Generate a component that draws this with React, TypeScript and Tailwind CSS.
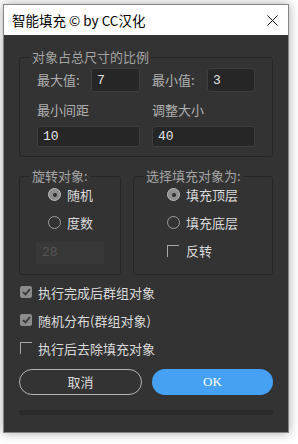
import type { ReactNode } from 'react';

const cjk = "font-['Noto_Sans_CJK_SC',sans-serif]";

function Radio({ checked, label }: { checked?: boolean; label: string }) {
  return (
    <div className="flex items-center gap-[6px] h-[17px]">
      {checked ? (
        <div className="w-[13px] h-[13px] rounded-full border border-[#bdbdbd] bg-[#8e8e8e] flex items-center justify-center">
          <div className="w-[4px] h-[4px] rounded-full bg-[#2c2c2c]" />
        </div>
      ) : (
        <div className="w-[13px] h-[13px] rounded-full border border-[#9c9c9c]" />
      )}
      <span className="text-[13px] leading-[17px] text-[#dadada]">{label}</span>
    </div>
  );
}

function Check({ checked, label }: { checked?: boolean; label: string }) {
  return (
    <div className="flex items-center gap-[6px] h-[18px]">
      {checked ? (
        <div className="w-[12px] h-[12px] rounded-[2px] bg-[#8c8c8c] flex items-center justify-center">
          <svg width="9" height="8" viewBox="0 0 9 8">
            <path d="M1 4.2 L3.4 6.4 L8 1.2" fill="none" stroke="#3a3a3a" strokeWidth="1.8" />
          </svg>
        </div>
      ) : (
        <div className="w-[12px] h-[12px] border-t border-l border-[#a8a8a8]" />
      )}
      <span className="text-[13px] leading-[17px] text-[#dadada]">{label}</span>
    </div>
  );
}

// padding goes on the inner div, Chromium places the legend after fieldset padding
function Group({ title, className, inner, children }: { title: string; className?: string; inner?: string; children: ReactNode }) {
  return (
    <fieldset className={`border border-[#262626] rounded-[3px] min-w-0 ${className ?? ''}`}>
      <legend className="ml-[10px] px-[2px] text-[13px] leading-[16px] text-[#a4a4a4] whitespace-nowrap">{title}</legend>
      <div className={inner}>{children}</div>
    </fieldset>
  );
}

function Field({ value, className }: { value: string; className?: string }) {
  return (
    <div
      className={`bg-[#262626] border border-[#3e3e3e] rounded-[3px] px-[5px] text-[13px] text-[#e4e4e4] font-['Liberation_Mono',monospace] flex items-center ${className ?? ''}`}
    >
      {value}
    </div>
  );
}

export default function App() {
  return (
    <div className={`w-[298px] h-[444px] bg-white pt-[4px] pl-[3px] ${cjk}`}>
      <div className="w-[286px] h-[429px] border border-[#858585] flex flex-col shadow-[0_0_10px_rgba(0,0,0,0.35)]">
        <header className="h-[30px] bg-white flex items-center justify-between pl-[8px] pr-[10px]">
          <span className="text-[13.5px] text-black">智能填充 © by CC汉化</span>
          <svg width="11" height="11" viewBox="0 0 11 11">
            <path d="M0.5 0.5 L10.5 10.5 M10.5 0.5 L0.5 10.5" stroke="#111" strokeWidth="1" />
          </svg>
        </header>

        <main className="flex-1 bg-[#333333] px-[15px] pt-[14px]">
          <Group title="对象占总尺寸的比例" inner="px-[17px] pt-[3px] pb-[9px]">
            <div className="grid grid-cols-2 gap-x-[12px]">
              <div className="flex items-center justify-between">
                <span className="text-[13px] text-[#b0b0b0]">最大值:</span>
                <Field value="7" className="w-[49px] h-[24px] items-start pt-[2px]" />
              </div>
              <div className="flex items-center justify-between">
                <span className="text-[13px] text-[#b0b0b0]">最小值:</span>
                <Field value="3" className="w-[48px] h-[24px] items-start pt-[2px]" />
              </div>
              <span className="mt-[10px] text-[13px] leading-[16px] text-[#b0b0b0]">最小间距</span>
              <span className="mt-[10px] text-[13px] leading-[16px] text-[#b0b0b0]">调整大小</span>
              <Field value="10" className="mt-[8px] h-[21px]" />
              <Field value="40" className="mt-[8px] h-[21px]" />
            </div>
          </Group>

          <div className="flex gap-[12px] mt-[11px]">
            <Group title="旋转对象:" className="w-[102px] shrink-0" inner="pl-[16px] pt-[2px] pb-[10px]">
              <div className="flex flex-col gap-[11px] ml-[12px]">
                <Radio checked label="随机" />
                <Radio label="度数" />
              </div>
              <div className="mt-[11px] w-[68px] h-[22px] bg-[#383838] rounded-[2px] px-[6px] flex items-center text-[13px] text-[#555555] font-['Liberation_Mono',monospace]">
                28
              </div>
            </Group>
            <Group title="选择填充对象为:" className="flex-1" inner="pl-[33px] pt-[2px]">
              <div className="flex flex-col gap-[11px]">
                <Radio checked label="填充顶层" />
                <Radio label="填充底层" />
                <div className="flex items-center gap-[7px] h-[17px]">
                  <div className="w-[12px] h-[12px] border-t border-l border-[#a8a8a8]" />
                  <span className="text-[13px] leading-[17px] text-[#dadada]">反转</span>
                </div>
              </div>
            </Group>
          </div>

          <div className="flex flex-col gap-[10px] mt-[8px] pl-[1px]">
            <Check checked label="执行完成后群组对象" />
            <Check checked label="随机分布(群组对象)" />
            <Check label="执行后去除填充对象" />
          </div>

          <div className="flex gap-[10px] mt-[12px]">
            <button className="flex-1 h-[26px] rounded-full border border-[#b4b4b4] text-[13px] text-[#dcdcdc]">
              取消
            </button>
            <button className="flex-1 h-[26px] rounded-full bg-[#46a0f4] text-[13px] text-white font-['Liberation_Serif',serif]">
              OK
            </button>
          </div>

          <div className="mt-[15px] h-[5px] rounded-full bg-[#2a2a2a]" />
        </main>
      </div>
    </div>
  );
}
